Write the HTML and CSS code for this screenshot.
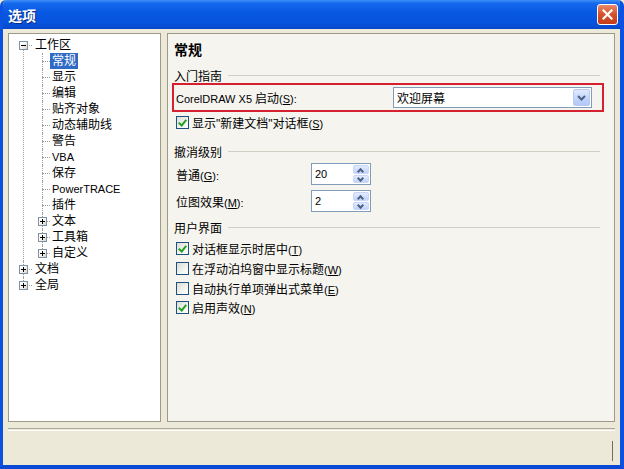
FILE: index.html
```html
<!DOCTYPE html>
<html lang="zh-CN">
<head>
<meta charset="UTF-8">
<title>选项</title>
<link rel="stylesheet" href="styles.css">
</head>
<body>
  <div class="window">
    <div class="titlebar">
      <span class="title">选项</span>
      <span class="close">
        <svg width="11" height="11" viewBox="0 0 11 11"><path d="M1.5 1.5 L9.5 9.5 M9.5 1.5 L1.5 9.5" stroke="#fff" stroke-width="2.2" stroke-linecap="square"/></svg>
      </span>
    </div>

    <div class="body">
      <div class="main">
        <!-- left tree -->
        <div class="tree">
          <ul class="root">
            <li class="open">
              <span class="exp minus"></span><span class="lbl">工作区</span>
              <ul class="sub">
                <li><span class="lbl sel">常规</span></li>
                <li><span class="lbl">显示</span></li>
                <li><span class="lbl">编辑</span></li>
                <li><span class="lbl">贴齐对象</span></li>
                <li><span class="lbl">动态辅助线</span></li>
                <li><span class="lbl">警告</span></li>
                <li><span class="lbl lat">VBA</span></li>
                <li><span class="lbl">保存</span></li>
                <li><span class="lbl lat">PowerTRACE</span></li>
                <li><span class="lbl">插件</span></li>
                <li><span class="exp plus"></span><span class="lbl">文本</span></li>
                <li><span class="exp plus"></span><span class="lbl">工具箱</span></li>
                <li><span class="exp plus"></span><span class="lbl">自定义</span></li>
              </ul>
            </li>
            <li><span class="exp plus"></span><span class="lbl">文档</span></li>
            <li><span class="exp plus"></span><span class="lbl">全局</span></li>
          </ul>
        </div>

        <!-- right page -->
        <div class="panel">
          <div class="heading">常规</div>

          <div class="group">入门指南</div>
          <div class="highlight">
            <span><span class="lat">CorelDRAW X5 </span>启动<span class="key">(<u>S</u>):</span></span>
            <div class="combo">
              <span>欢迎屏幕</span>
              <span class="drop">
                <svg width="9" height="6" viewBox="0 0 9 6"><path d="M1 1 L4.5 4.5 L8 1" fill="none" stroke="#4d6185" stroke-width="2"/></svg>
              </span>
            </div>
          </div>
          <label class="check first"><span class="box on"></span><span>显示"新建文档"对话框<span class="key">(<u>S</u>)</span></span></label>

          <div class="group g2">撤消级别</div>
          <div class="field">
            <span class="flabel">普通<span class="key">(<u>G</u>):</span></span>
            <div class="spin"><span class="val lat">20</span><span class="btns"><span class="up"></span><span class="dn"></span></span></div>
          </div>
          <div class="field f2">
            <span class="flabel">位图效果<span class="key">(<u>M</u>):</span></span>
            <div class="spin"><span class="val lat">2</span><span class="btns"><span class="up"></span><span class="dn"></span></span></div>
          </div>

          <div class="group g3">用户界面</div>
          <div class="checks">
            <label class="check"><span class="box on"></span><span>对话框显示时居中<span class="key">(<u>T</u>)</span></span></label>
            <label class="check"><span class="box"></span><span>在浮动泊坞窗中显示标题<span class="key">(<u>W</u>)</span></span></label>
            <label class="check"><span class="box"></span><span>自动执行单项弹出式菜单<span class="key">(<u>E</u>)</span></span></label>
            <label class="check"><span class="box on"></span><span>启用声效<span class="key">(<u>N</u>)</span></span></label>
          </div>
        </div>
      </div>

      <div class="sep"></div>
      <div class="footer"><span class="grip"></span></div>
    </div>
  </div>
</body>
</html>
```

FILE: styles.css
```css
/* XP style options dialog */
html, body {
  margin: 0;
  padding: 0;
  background: #ece9d8;
}

body {
  font-family: "Liberation Sans", "Noto Sans CJK SC", sans-serif;
  font-size: 12px;
  color: #000;
  text-autospace: no-autospace;
}

/* latin runs are Tahoma 8pt in the original, a bit smaller than the CJK */
.lat,
.key {
  font-family: "Liberation Sans", sans-serif;
  font-size: 11px;
}

u {
  text-underline-offset: 1px;
}

.window {
  width: 624px;
  height: 469px;
  box-sizing: border-box;
  display: flex;
  flex-direction: column;
  border-left: 3px solid #0b52e0;
  border-right: 4px solid #0b52e0;
  border-bottom: 4px solid #0a48d6;
  border-radius: 6px 6px 0 0;
  overflow: hidden;
}

/* title bar */
.titlebar {
  height: 29px;
  margin: 0 -4px 0 -3px;
  padding: 0 6px 0 8px;
  display: flex;
  align-items: center;
  background: linear-gradient(to bottom, #3d8ff7 0%, #1468ec 12%, #0857e3 45%, #0653dd 80%, #0848c8 100%);
}

.title {
  flex: 1;
  color: #fff;
  font-weight: bold;
  font-size: 14px;
  text-shadow: 1px 1px 0 #0a2a80;
}

.close {
  width: 19px;
  height: 19px;
  display: flex;
  align-items: center;
  justify-content: center;
  border: 1px solid #fff;
  border-radius: 3px;
  background: linear-gradient(to bottom, #e88a6a 0%, #d7502a 50%, #c23c18 100%);
}

.body {
  flex: 1;
  display: flex;
  flex-direction: column;
  padding: 4px 5px 0 5px;
}

.main {
  height: 389px;
  display: flex;
  gap: 6px;
}

/* tree view */
.tree {
  width: 153px;
  box-sizing: border-box;
  background: #fff;
  border: 1px solid #9d9a8c;
}

.tree ul {
  list-style: none;
  margin: 0;
  padding: 0;
}

.tree .root {
  padding-top: 3px;
}

.root > li,
.sub > li {
  position: relative;
  line-height: 16px;
}

.root > li {
  padding-left: 24px;
}

.sub > li {
  padding-left: 17px;
}

.lbl {
  display: inline-block;
  height: 16px;
  padding: 0 2px;
  position: relative;
  z-index: 1;
}

.lbl.sel {
  background: #316ac5;
  color: #fff;
}

/* dotted connectors */
.root > li::before,
.sub > li::before {
  content: "";
  position: absolute;
  top: 8px;
  border-top: 1px dotted #a0a0a0;
}

.root > li::before { left: 14px; width: 9px; }
.sub > li::before { left: 9px; width: 8px; }

.root > li::after,
.sub > li::after {
  content: "";
  position: absolute;
  top: 0;
  bottom: 0;
  border-left: 1px dotted #a0a0a0;
}

.root > li::after { left: 14px; }
.sub > li::after { left: 9px; }

.root > li:first-child::after { top: 8px; }
.root > li:last-child::after,
.sub > li:last-child::after { bottom: auto; height: 8px; }

.exp {
  position: absolute;
  top: 4px;
  width: 9px;
  height: 9px;
  box-sizing: border-box;
  border: 1px solid #7c92a8;
  background: linear-gradient(135deg, #fff 30%, #d8d6cc 100%);
  z-index: 2;
}

.root > li > .exp { left: 10px; }
.sub > li > .exp { left: 5px; }

.exp::before {
  content: "";
  position: absolute;
  left: 1px;
  top: 3px;
  width: 5px;
  height: 1px;
  background: #000;
}

.exp.plus::after {
  content: "";
  position: absolute;
  left: 3px;
  top: 1px;
  width: 1px;
  height: 5px;
  background: #000;
}

/* right page */
.panel {
  flex: 1;
  box-sizing: border-box;
  background: #f5f4ef;
  border: 1px solid #9d9a8c;
  padding: 0 14px 0 6px;
}

.heading {
  margin-top: 6px;
  height: 20px;
  line-height: 20px;
  font-size: 14px;
  font-weight: bold;
}

.group {
  margin-top: 7px;
  height: 16px;
  display: flex;
  align-items: center;
  gap: 6px;
}

.group::after {
  content: "";
  flex: 1;
  border-top: 1px solid #d0cfc3;
}

.g2 { margin-top: 11px; }
.g3 { margin-top: 7px; }

.highlight {
  margin: 0 -4px 0 -2px;
  height: 29px;
  box-sizing: border-box;
  border: 2px solid #d5202f;
  display: flex;
  align-items: center;
  padding-left: 2px;
}

.combo {
  margin-left: auto;
  margin-right: 10px;
  width: 199px;
  height: 21px;
  box-sizing: border-box;
  border: 1px solid #7f9db9;
  background: #fff;
  display: flex;
  align-items: center;
  padding: 0 1px 0 3px;
}

.combo span:first-child {
  flex: 1;
}

.drop {
  width: 17px;
  height: 17px;
  box-sizing: border-box;
  border: 1px solid #b9c9ef;
  border-radius: 2px;
  background: linear-gradient(to bottom, #e2ebfe 0%, #c1d3fb 60%, #b3c7f7 100%);
  display: flex;
  align-items: center;
  justify-content: center;
}

.check {
  display: flex;
  align-items: center;
  gap: 3px;
  height: 20px;
  padding-left: 2px;
}

.check.first {
  margin-top: 0;
}

.box {
  width: 13px;
  height: 13px;
  box-sizing: border-box;
  border: 1px solid #1c5180;
  background: linear-gradient(135deg, #dcdcd4 0%, #f4f4f0 60%, #fff 100%);
  position: relative;
}

.box.on::after {
  content: "";
  position: absolute;
  left: 3px;
  top: 1px;
  width: 3px;
  height: 6px;
  border-right: 2px solid #21a121;
  border-bottom: 2px solid #21a121;
  transform: rotate(40deg);
}

.field {
  margin-top: 4px;
  height: 22px;
  display: flex;
  align-items: center;
  padding-left: 2px;
}

.field.f2 {
  margin-top: 5px;
}

.flabel {
  width: 135px;
}

.spin {
  width: 60px;
  height: 22px;
  box-sizing: border-box;
  border: 1px solid #7f9db9;
  background: #fff;
  display: flex;
  align-items: center;
  padding: 1px 1px 1px 3px;
}

.val {
  flex: 1;
}

.btns {
  width: 16px;
  height: 18px;
  display: flex;
  flex-direction: column;
  gap: 1px;
}

.btns span {
  flex: 1;
  border-radius: 2px;
  background: linear-gradient(to bottom, #e2ebfe 0%, #c1d3fb 100%);
  border: 1px solid #c9d6f6;
  box-sizing: border-box;
  position: relative;
}

.btns span::after {
  content: "";
  position: absolute;
  left: 4px;
  width: 3px;
  height: 3px;
  border-left: 2px solid #4d6185;
  border-top: 2px solid #4d6185;
}

.btns .up::after { top: 3px; transform: rotate(45deg); }
.btns .dn::after { top: 0; transform: rotate(225deg); }

.checks {
  margin-top: 4px;
}

.checks .check {
  height: 19.7px;
}

/* bottom strip */
.sep {
  margin-top: 6px;
  height: 1px;
  border-top: 1px solid #aca899;
  border-bottom: 1px solid #fff;
}

.footer {
  flex: 1;
  display: flex;
  justify-content: flex-end;
  align-items: flex-end;
  padding: 0 2px 4px 0;
}

.grip {
  width: 1px;
  height: 20px;
  background: #6f6d66;
}
```
